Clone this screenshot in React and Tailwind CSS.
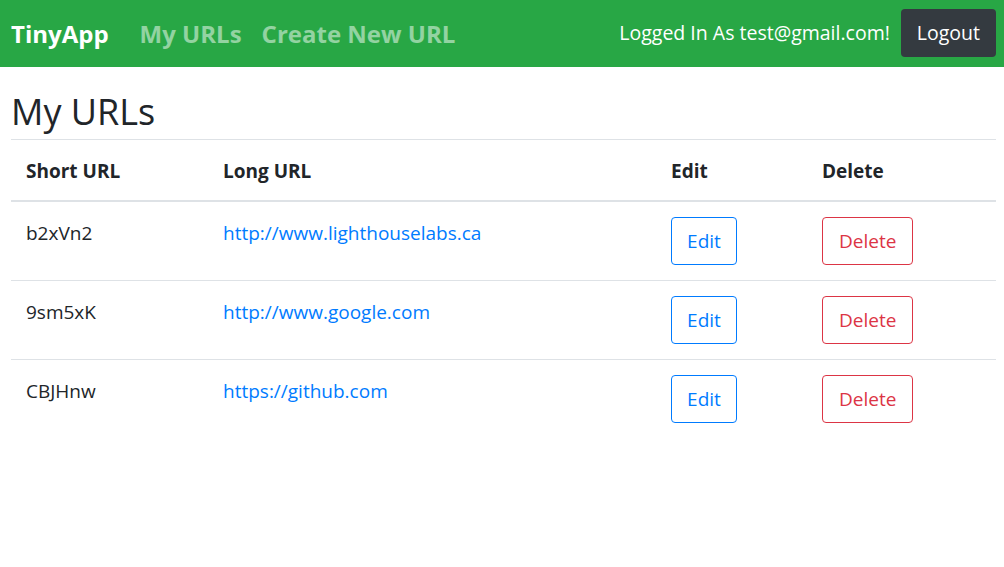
const urls = [
  { id: "b2xVn2", long: "http://www.lighthouselabs.ca" },
  { id: "9sm5xK", long: "http://www.google.com" },
  { id: "CBJHnw", long: "https://github.com" },
]

export default function App() {
  return (
    <div className="min-h-screen bg-white text-[#212529] font-['Open_Sans',sans-serif]">

      {/* NAVBAR */}
      <nav className="h-[67px] bg-[#28a745] flex items-center pl-[11px] pr-[8px]">
        <a className="text-[24px] font-bold text-white">TinyApp</a>
        <a className="ml-[31px] text-[24px] font-bold text-white/50">My URLs</a>
        <a className="ml-[20px] text-[24px] font-bold text-white/50">Create New URL</a>
        <div className="ml-auto flex items-center mb-[2px]">
          <span className="text-[19.5px] text-white">Logged In As test@gmail.com!</span>
          <button className="ml-[11px] h-[48px] px-[16px] rounded-[4px] bg-[#343a40] text-white text-[19.5px]">
            Logout
          </button>
        </div>
      </nav>

      {/* CONTENT */}
      <main className="pl-[11px] pr-[8px]">
        <h1 className="text-[36px] font-medium leading-[46px] pt-[22px] pb-[4px]">My URLs</h1>

        <table className="w-full text-[19px] leading-[30px] border-collapse">
          <thead>
            <tr className="border-t border-[#dee2e6] border-b-2">
              <th className="text-left font-bold px-[15px] pt-[16px] pb-[14px] w-[197px]">Short URL</th>
              <th className="text-left font-bold px-[15px] pt-[16px] pb-[14px] w-[448px]">Long URL</th>
              <th className="text-left font-bold px-[15px] pt-[16px] pb-[14px] w-[151px]">Edit</th>
              <th className="text-left font-bold px-[15px] pt-[16px] pb-[14px]">Delete</th>
            </tr>
          </thead>
          <tbody>
            {urls.map((u) => (
              <tr key={u.id} className="border-t border-[#dee2e6] align-top">
                <td className="px-[15px] pt-[16px] pb-[15px]">{u.id}</td>
                <td className="px-[15px] pt-[16px] pb-[15px]">
                  <a className="text-[#007bff]">{u.long}</a>
                </td>
                <td className="px-[15px] py-[15px]">
                  <button className="h-[48px] w-[66px] border border-[#007bff] rounded-[4px] text-[#007bff]">
                    Edit
                  </button>
                </td>
                <td className="px-[15px] py-[15px]">
                  <button className="h-[48px] px-[16px] border border-[#dc3545] rounded-[4px] text-[#dc3545]">
                    Delete
                  </button>
                </td>
              </tr>
            ))}
          </tbody>
        </table>
      </main>
    </div>
  )
}
